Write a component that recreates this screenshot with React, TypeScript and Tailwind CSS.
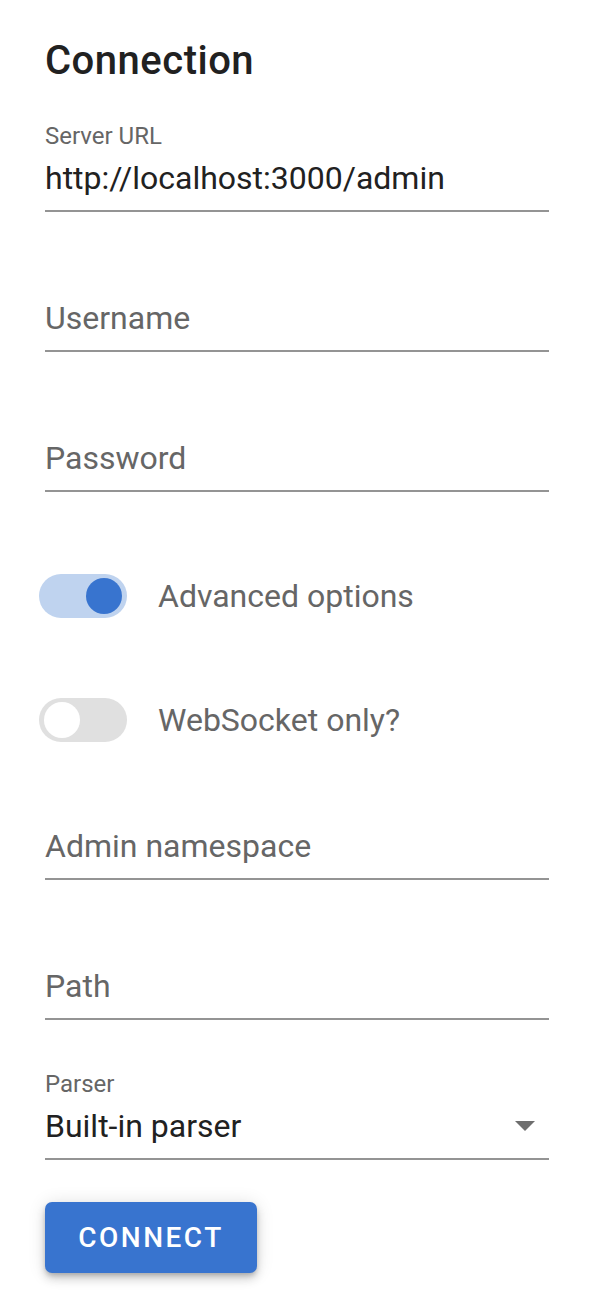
import React, { useState } from 'react';

const font = { fontFamily: 'Roboto, "Liberation Sans", sans-serif' };

type FieldProps = { label: string; value?: string; top: string; select?: boolean };

const Field: React.FC<FieldProps> = ({ label, value, top, select }) => {
  const filled = value !== undefined;
  return (
    <div className={`${top} flex flex-col border-b-2 border-[#949494] pb-3`}>
      {filled && (
        <div className="h-6 text-[24px] leading-6 text-[#666666]">{label}</div>
      )}
      <div className={`${filled ? 'mt-2.5' : ''} flex h-10 items-center justify-between`}>
        <span className={`text-[32px] leading-10 ${filled ? 'text-[#212121]' : 'text-[#666666]'}`}>
          {filled ? value : label}
        </span>
        {select && (
          <svg width="20" height="10" viewBox="0 0 20 10" className="mr-[14px]">
            <path d="M0 0 L20 0 L10 10 Z" fill="#6e6e6e" />
          </svg>
        )}
      </div>
    </div>
  );
};

const Switch: React.FC<{ on: boolean; label: string; top: string; onToggle: () => void }> = ({ on, label, top, onToggle }) => (
  <button type="button" onClick={onToggle} className={`${top} flex items-center text-left`}>
    <span
      className={`-ml-1.5 flex h-11 w-[88px] items-center rounded-full px-[5px] ${
        on ? 'justify-end bg-[#bfd3ef]' : 'justify-start bg-[#e0e0e0]'
      }`}
    >
      <span className={`h-9 w-9 rounded-full ${on ? 'bg-[#3874cf]' : 'bg-white'}`} />
    </span>
    <span className="ml-[31px] text-[32px] leading-10 text-[#666666]">{label}</span>
  </button>
);

export default function App() {
  const [advanced, setAdvanced] = useState(true);
  const [wsOnly, setWsOnly] = useState(false);

  return (
    <div className="min-h-screen bg-white px-[45px] pt-[37px]" style={font}>
      <h1 className="h-12 text-[40px] font-medium leading-[48px] tracking-[0.5px] text-[#212121]">Connection</h1>

      <Field top="mt-[39px]" label="Server URL" value="http://localhost:3000/admin" />
      <Field top="mt-[86px]" label="Username" />
      <Field top="mt-[86px]" label="Password" />

      <div className="flex flex-col">
        <Switch top="mt-[82px]" on={advanced} label="Advanced options" onToggle={() => setAdvanced(!advanced)} />
        <Switch top="mt-[80px]" on={wsOnly} label="WebSocket only?" onToggle={() => setWsOnly(!wsOnly)} />
      </div>

      <Field top="mt-[84px]" label="Admin namespace" />
      <Field top="mt-[86px]" label="Path" />
      <Field top="mt-[52px]" label="Parser" value="Built-in parser" select />

      <button
        type="button"
        className="mt-[42px] h-[71px] w-[212px] rounded-[7px] bg-[#3874cf] text-[28px] font-medium tracking-[2.5px] text-white shadow-[0_3px_5px_-1px_rgba(0,0,0,0.2),0_6px_10px_0_rgba(0,0,0,0.14),0_1px_18px_0_rgba(0,0,0,0.12)]"
      >
        CONNECT
      </button>
    </div>
  );
}
